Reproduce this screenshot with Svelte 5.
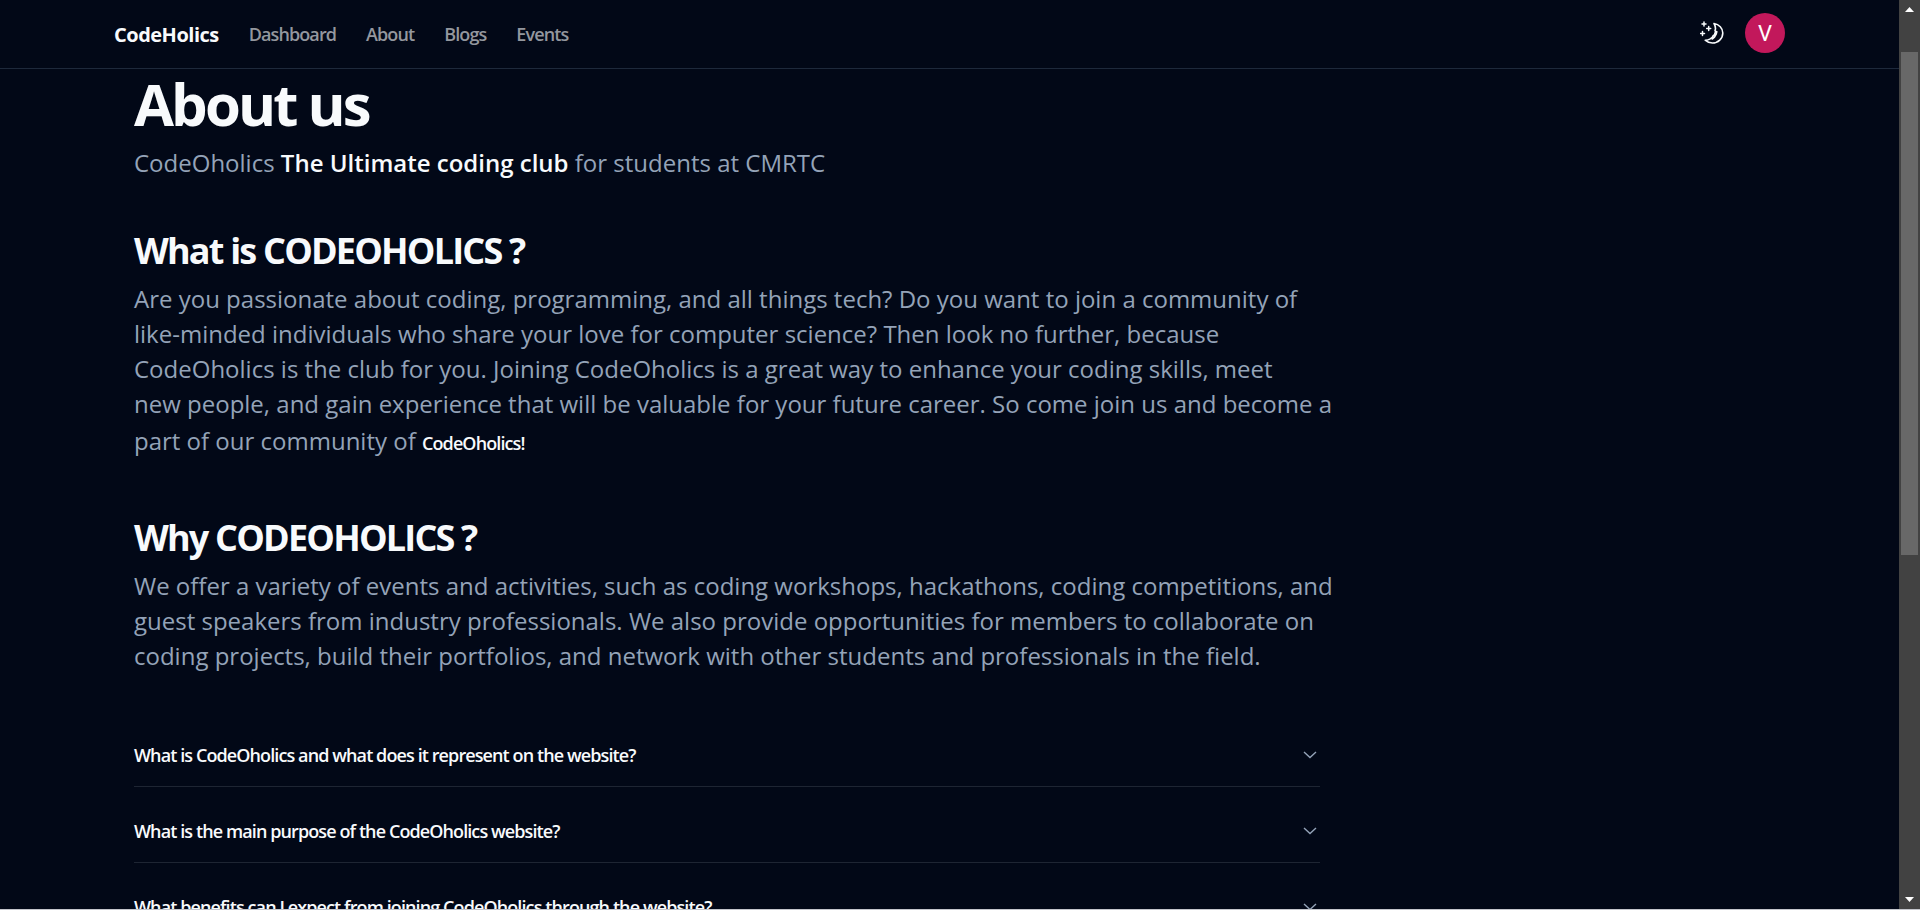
<script>
  const links = ['Dashboard', 'About', 'Blogs', 'Events'];
  const questions = [
    'What is CodeOholics and what does it represent on the website?',
    'What is the main purpose of the CodeOholics website?',
    'What benefits can I expect from joining CodeOholics through the website?'
  ];
</script>

<div class="window">
  <div class="page">
    <header>
      <div class="bar">
        <nav>
          <a class="brand" href="#home">CodeHolics</a>
          {#each links as link}
            <a href={'#' + link.toLowerCase()}>{link}</a>
          {/each}
        </nav>
        <div class="actions">
          <button class="theme" aria-label="Toggle theme">
            <svg viewBox="0 0 24 24" width="24" height="24" fill="none" stroke="currentColor" stroke-width="1.6" stroke-linejoin="round" stroke-linecap="round">
              <path d="M14 2.500c5 .8 8.800 4.600 8.800 9.500 0 5.500-4.700 10-10.400 10-2.800 0-5.300-1-7.200-2.800 1.800 0 3.600-.4 5-1.300l2-1.500 1-1.700 1.500-1.200.2-1.500 1-1-.9-1.200.5-2C15.400 5.900 15 4 14 2.500z" />
              <path d="M12.300 17.800l2-1.800 1.700-3 .6-2.300" stroke-width="2" />
              <path d="M4 1v4M2 3h4M8.700 5.500v4M6.700 7.500h4M2.500 10.500v4M.5 12.500h4" stroke-width="1.500" />
            </svg>
          </button>
          <button class="avatar" aria-label="Account">V</button>
        </div>
      </div>
    </header>

    <main>
      <article>
        <h1>About us</h1>
        <p class="lead">CodeOholics <strong>The Ultimate coding club</strong> for students at CMRTC</p>

        <section>
          <h2>What is CODEOHOLICS ?</h2>
          <p>
            Are you passionate about coding, programming, and all things tech? Do you want to join a community of<br />
            like-minded individuals who share your love for computer science? Then look no further, because<br />
            CodeOholics is the club for you. Joining CodeOholics is a great way to enhance your coding skills, meet<br />
            new people, and gain experience that will be valuable for your future career. So come join us and become a<br />
            part of our community of <b>CodeOholics!</b>
          </p>
        </section>

        <section>
          <h2>Why CODEOHOLICS ?</h2>
          <p>
            We offer a variety of events and activities, such as coding workshops, hackathons, coding competitions, and<br />
            guest speakers from industry professionals. We also provide opportunities for members to collaborate on<br />
            coding projects, build their portfolios, and network with other students and professionals in the field.
          </p>
        </section>

        <div class="faq">
          {#each questions as question}
            <button class="question">
              <span>{question}</span>
              <svg viewBox="0 0 16 16" width="16" height="16" fill="none" stroke="currentColor" stroke-width="1.400"><path d="M2 5l6 5.500L14 5" /></svg>
            </button>
          {/each}
        </div>
      </article>
    </main>
  </div>

  <div class="scrollbar" aria-hidden="true">
    <svg viewBox="0 0 9 5" width="9" height="5" fill="#fff"><path d="M4.500 0L9 5H0z" /></svg>
    <div class="track"><div class="thumb"></div></div>
    <svg viewBox="0 0 9 5" width="9" height="5" fill="#fff"><path d="M4.500 5L9 0H0z" /></svg>
  </div>
</div>

<style>
  :global(body) { margin: 0; background: #020817; }
  .window {
    box-sizing: border-box;
    display: flex;
    height: 100vh;
    overflow: hidden;
    border-bottom: 1px solid #c4c6cc;
    background: #020817;
    color: #f8fafc;
    font-family: "Open Sans", "Noto Sans", sans-serif;
  }
  .page { flex: 1; min-width: 0; overflow: hidden; }
  header { border-bottom: 1px solid #1e293b; }
  .bar {
    display: flex;
    justify-content: space-between;
    align-items: center;
    height: 68px;
    margin: 0 114px;
  }
  nav { display: flex; align-items: center; gap: 30px; }
  nav a {
    color: #94979e;
    font-size: 18px;
    font-weight: 600;
    letter-spacing: -0.05em;
    text-decoration: none;
  }
  nav .brand { color: #f8fafc; font-size: 20px; font-weight: 700; letter-spacing: -0.025em; }
  button { border: 0; padding: 0; background: none; color: inherit; font: inherit; cursor: pointer; }
  .actions { display: flex; align-items: center; gap: 21px; padding-bottom: 2px; }
  .theme { display: flex; }
  .avatar {
    width: 40px;
    height: 40px;
    border-radius: 50%;
    background: #c2185b;
    color: #fff;
    font-family: Roboto, sans-serif;
    font-size: 22px;
  }
  main { padding: 0 134px; }
  article { max-width: 1186px; }
  h1, h2, p { margin: 0; }
  h1 { font-size: 58px; line-height: 70px; font-weight: 700; letter-spacing: -0.05em; }
  h2 { font-size: 36px; line-height: 44px; font-weight: 700; letter-spacing: -0.05em; }
  p { margin-right: -24px; color: #94a3b8; font-size: 24px; line-height: 35px; }
  .lead { margin-top: 6px; }
  .lead strong { color: #f8fafc; font-weight: 600; }
  section { margin-top: 49px; padding-bottom: 2px; }
  section p { margin-top: 8px; }
  p b { color: #f8fafc; font-size: 18px; line-height: 44px; font-weight: 600; letter-spacing: -0.05em; }
  .faq { margin-top: 36px; }
  .question {
    box-sizing: border-box;
    display: flex;
    justify-content: space-between;
    align-items: center;
    width: 100%;
    height: 76px;
    padding: 12px 2px 0 0;
    border-bottom: 1px solid #1e2533;
    font-size: 18px;
    font-weight: 600;
    letter-spacing: -0.05em;
    text-align: left;
  }
  .question svg { color: #94a3b8; }
  .scrollbar {
    box-sizing: border-box;
    display: flex;
    flex-direction: column;
    align-items: center;
    gap: 7px;
    width: 21px;
    padding: 7px 2px;
    background: #424242;
  }
  .scrollbar svg { flex: none; }
  .track { flex: 1; width: 17px; padding-top: 33px; }
  .thumb { height: 60%; background: #686868; }
</style>
